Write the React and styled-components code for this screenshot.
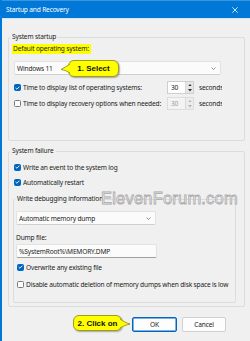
import React from "react";
import styled, { createGlobalStyle } from "styled-components";

const Global = createGlobalStyle`
  html, body { margin: 0; padding: 0; background: #f0f0f0; }
  body {
    font-family: "Noto Sans", "Liberation Sans", sans-serif;
    font-size: 6.6px;
    letter-spacing: -0.17px;
    color: #1b1b1b;
    overflow: hidden;
  }
  * { box-sizing: border-box; }
`;

const Window = styled.div`
  position: relative;
  width: 250px;
  height: 341px;
  background: #f0f0f0;
  border-left: 2px solid #0078d7;
  display: flex;
  flex-direction: column;
  overflow: hidden;
`;

const TitleBar = styled.div`
  flex-shrink: 0;
  height: 19px;
  background: #0078d7;
  border-top: 1px solid #3b95dc;
  border-bottom: 1px solid #d3e6f7;
  display: flex;
  align-items: center;
  justify-content: space-between;
  padding: 0 12px 0 4px;
  color: #ffffff;
`;

const Title = styled.span`
  font-size: 6.6px;
  line-height: 10px;
`;

const Body = styled.div`
  padding: 0 5px 0 6px;
  display: flex;
  flex-direction: column;
`;

const Group = styled.fieldset`
  margin: ${(p) => p.$mt}px 0 0 ${(p) => p.$ml || 0}px;
  padding: 0 ${(p) => p.$pr}px ${(p) => p.$pb}px ${(p) => p.$pl}px;
  border: 1px solid #dcdcdc;
  border-radius: 2px;
  min-width: 0;
  overflow: hidden;
`;

const Legend = styled.legend`
  padding: 0 2px;
  margin-left: ${(p) => p.$ml}px;
  line-height: 10px;
  font-size: 6.6px;
  color: #1b1b1b;
`;

const Line = styled.div`
  line-height: 10px;
  margin-top: ${(p) => p.$mt || 0}px;
  white-space: nowrap;
`;

const Highlight = styled.span`
  display: inline-block;
  background: #ffff00;
  margin-left: -2px;
  padding: 0 2px 0 1px;
`;

const Anchor = styled.div`
  position: relative;
  margin-top: ${(p) => p.$mt || 0}px;
  margin-left: ${(p) => p.$ml || 0}px;
`;

const Select = styled.div`
  width: ${(p) => p.$w}px;
  height: 14px;
  background: #fbfbfb;
  border: 1px solid #e2e2e2;
  border-bottom-color: #d0d0d0;
  border-radius: 2px;
  display: flex;
  align-items: center;
  justify-content: space-between;
  padding: 0 4px 0 2px;
  white-space: nowrap;
`;

const TextInput = styled.div`
  width: ${(p) => p.$w}px;
  height: 14px;
  margin-top: ${(p) => p.$mt || 0}px;
  background: #fbfbfb;
  border: 1px solid #e2e2e2;
  border-bottom-color: #a0a0a0;
  border-radius: 2px;
  display: flex;
  align-items: center;
  padding: 0 2px;
  white-space: nowrap;
`;

const Callout = styled.div`
  position: absolute;
  left: ${(p) => p.$left}px;
  top: ${(p) => p.$top}px;
  width: ${(p) => p.$w}px;
  height: ${(p) => p.$h}px;
  background: #ffff00;
  border: 1px solid #9e9e1c;
  border-radius: 6px;
  box-shadow: 1px 1px 1.5px rgba(0, 0, 0, 0.3);
  display: flex;
  align-items: center;
  justify-content: center;
  font-family: "Liberation Sans", Arial, sans-serif;
  font-weight: bold;
  font-size: 8px;
  letter-spacing: 0;
  color: #111;
  z-index: 2;
`;

const Pointer = styled.svg`
  position: absolute;
  top: ${(p) => p.$top}px;
  ${(p) => (p.$side === "left" ? "left: -8px;" : "right: -9px;")}
  overflow: visible;
`;

const SpinRow = styled.div`
  display: grid;
  grid-template-columns: 153px 27px 28px;
  align-items: center;
  height: 13px;
  margin-top: ${(p) => p.$mt}px;
  margin-left: ${(p) => p.$ml || 0}px;
`;

const CheckRow = styled.label`
  display: flex;
  align-items: center;
  gap: 2px;
  height: ${(p) => p.$h || 12}px;
  margin-top: ${(p) => p.$mt || 0}px;
  margin-left: ${(p) => p.$ml || 0}px;
  white-space: nowrap;
  overflow: hidden;
`;

const Box = styled.span`
  flex-shrink: 0;
  width: 7px;
  height: 7px;
  border-radius: 1.5px;
  display: flex;
  align-items: center;
  justify-content: center;
  background: ${(p) => (p.$on ? "#0067c0" : "#fbfbfb")};
  border: 1px solid ${(p) => (p.$on ? "#0067c0" : "#7a7a7a")};
`;

const Spin = styled.div`
  height: 13px;
  display: flex;
  border: 1px solid ${(p) => (p.$off ? "#dddddd" : "#cfcfcf")};
  background: ${(p) => (p.$off ? "#f3f3f3" : "#ffffff")};
  color: ${(p) => (p.$off ? "#a0a0a0" : "#1b1b1b")};
`;

const SpinValue = styled.span`
  flex: 1;
  padding-left: 3px;
  line-height: 11px;
`;

const SpinArrows = styled.span`
  width: 8px;
  display: flex;
  flex-direction: column;
  align-items: center;
  justify-content: space-around;
  background: ${(p) => (p.$off ? "#ececec" : "#e6e6e6")};
  border-left: 1px solid #d9d9d9;
`;

const Seconds = styled.span`
  padding-left: 5px;
  overflow: hidden;
  white-space: nowrap;
`;

const ButtonRow = styled.div`
  position: relative;
  display: flex;
  justify-content: flex-end;
  gap: 5px;
  margin-top: 10px;
  padding-right: 19px;
`;

const Button = styled.div`
  width: ${(p) => p.$w}px;
  height: 15px;
  border-radius: 2px;
  background: #fdfdfd;
  border: 1px solid ${(p) => (p.$primary ? "#0067c0" : "#d0d0d0")};
  box-shadow: ${(p) => (p.$primary ? "inset 0 0 0 0.5px #0067c0" : "none")};
  display: flex;
  align-items: center;
  justify-content: center;
`;

const Watermark = styled.div`
  position: absolute;
  left: 99px;
  top: 190px;
  font-family: "Liberation Sans", Arial, sans-serif;
  font-size: 16.5px;
  line-height: 16.5px;
  letter-spacing: 0.2px;
  color: #ffffff;
  -webkit-text-stroke: 0.8px #a9a9a9;
  white-space: nowrap;
  pointer-events: none;
  z-index: 3;
`;

const Chevron = () => (
  <svg width="5" height="3" viewBox="0 0 5 3">
    <path d="M0.5 0.5 L2.5 2.5 L4.5 0.5" fill="none" stroke="#666" strokeWidth="0.7" />
  </svg>
);

const Tick = () => (
  <svg width="5" height="4" viewBox="0 0 5 4">
    <path d="M0.6 2 L1.9 3.2 L4.4 0.7" fill="none" stroke="#fff" strokeWidth="0.9" />
  </svg>
);

const Check = ({ on, children, ...rest }) => (
  <CheckRow {...rest}>
    <Box $on={on}>{on && <Tick />}</Box>
    <span>{children}</span>
  </CheckRow>
);

const Arrows = ({ off }) => (
  <SpinArrows $off={off}>
    <svg width="4" height="2.5" viewBox="0 0 4 2.5">
      <path d="M0 2.5 L2 0 L4 2.5Z" fill={off ? "#b5b5b5" : "#333"} />
    </svg>
    <svg width="4" height="2.5" viewBox="0 0 4 2.5">
      <path d="M0 0 L2 2.5 L4 0Z" fill={off ? "#b5b5b5" : "#333"} />
    </svg>
  </SpinArrows>
);

export default function App() {
  return (
    <>
      <Global />
      <Window>
        <TitleBar>
          <Title>Startup and Recovery</Title>
          <svg width="6" height="6" viewBox="0 0 6 6">
            <path d="M0.3 0.3 L5.7 5.7 M5.7 0.3 L0.3 5.7" stroke="#fff" strokeWidth="0.8" />
          </svg>
        </TitleBar>
        <Body>
          <Group $mt={13} $pl={5} $pr={8} $pb={30}>
            <Legend $ml={-4}>System startup</Legend>
            <Line $mt={2}>
              <Highlight>Default operating system:</Highlight>
            </Line>
            <Anchor $mt={7}>
              <Select $w={207}>
                <span>Windows 11</span>
                <Chevron />
              </Select>
              <Callout $left={54} $top={-1} $w={51} $h={17}>
                <Pointer $side="left" $top={2} width="9" height="11" viewBox="0 0 9 11">
                  <path d="M9 1 C6 3 3 5 0 6.5 C3 7 6 8 9 10" fill="#ffff00" stroke="#9e9e1c" strokeWidth="1" />
                </Pointer>
                1. Select
              </Callout>
            </Anchor>
            <SpinRow $mt={6}>
              <Check on $h={13}>Time to display list of operating systems:</Check>
              <Spin>
                <SpinValue>30</SpinValue>
                <Arrows />
              </Spin>
              <Seconds>seconds</Seconds>
            </SpinRow>
            <SpinRow $mt={3}>
              <Check $h={13}>Time to display recovery options when needed:</Check>
              <Spin $off>
                <SpinValue>30</SpinValue>
                <Arrows off />
              </Spin>
              <Seconds>seconds</Seconds>
            </SpinRow>
          </Group>

          <Group $mt={5} $pl={4} $pr={8} $pb={3}>
            <Legend $ml={-3}>System failure</Legend>
            <Check on $mt={5} $ml={1}>Write an event to the system log</Check>
            <Check on $mt={3} $ml={1}>Automatically restart</Check>
            <Group $mt={6} $pl={2} $pr={4} $pb={12}>
              <Legend $ml={-1}>Write debugging information</Legend>
              <Anchor $mt={7}>
                <Select $w={140}>
                  <span>Automatic memory dump</span>
                  <Chevron />
                </Select>
              </Anchor>
              <Line $mt={8}>Dump file:</Line>
              <TextInput $w={141} $mt={1}>%SystemRoot%\MEMORY.DMP</TextInput>
              <Check on $mt={3} $ml={1}>Overwrite any existing file</Check>
              <Check $mt={5} $ml={1}>
                Disable automatic deletion of memory dumps when disk space is low
              </Check>
            </Group>
          </Group>

          <ButtonRow>
            <Callout $left={65} $top={-2} $w={49} $h={16}>
              <Pointer $side="right" $top={1.5} width="10" height="11" viewBox="0 0 10 11">
                <path d="M0 1 C3 3 6 5 10 6 C6 7 3 8 0 10" fill="#ffff00" stroke="#9e9e1c" strokeWidth="1" />
              </Pointer>
              2. Click on
            </Callout>
            <Button $primary $w={45}>OK</Button>
            <Button $w={44}>Cancel</Button>
          </ButtonRow>
        </Body>
        <Watermark>ElevenForum.com</Watermark>
      </Window>
    </>
  );
}
